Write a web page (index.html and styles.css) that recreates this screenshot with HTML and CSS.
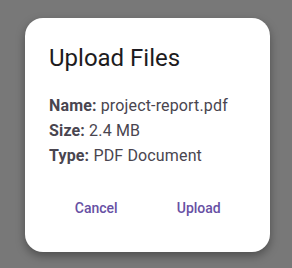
FILE: index.html
```html
<!DOCTYPE html>
<html>
<head>
    <title>Upload Files</title>
    <meta http-equiv="Content-Type" content="text/html; charset=utf-8" />
    <link rel="stylesheet" href="styles.css">
</head>
<body>
<div class="overlay">
    <div class="dialog">
        <div class="dialog-title">Upload Files</div>
        <div class="dialog-body">
            <div class="info-row"><b>Name:</b> project-report.pdf</div>
            <div class="info-row"><b>Size:</b> 2.4 MB</div>
            <div class="info-row"><b>Type:</b> PDF Document</div>
        </div>
        <div class="dialog-buttons">
            <div class="dialog-button">Cancel</div>
            <div class="dialog-button">Upload</div>
        </div>
    </div>
</div>
</body>
</html>
```

FILE: styles.css
```css
html, body {margin: 0; height: 100%; overflow: hidden;}
body{
    background: #787878;
    font-family: Roboto, "Liberation Sans", sans-serif;
}
.overlay{
    display: flex;
    justify-content: center;
    padding-top: 18px;
    padding-left: 3px;
}
.dialog{
    width: 197px;
    padding: 24px;
    background: white;
    border-radius: 18px;
    box-shadow: 0 4px 10px rgba(0, 0, 0, 0.35);
}
.dialog-title{
    font-size: 24px;
    line-height: 32px;
    color: #1d1b20;
    margin-bottom: 19px;
}
.dialog-body{
    font-size: 16px;
    line-height: 25px;
    letter-spacing: 0.15px;
    color: #49454f;
}
.dialog-body b{
    font-weight: 700;
}
.dialog-buttons{
    display: flex;
    gap: 8px;
    margin-top: 20px;
}
.dialog-button{
    flex: 1;
    text-align: center;
    padding: 10px 0;
    font-size: 14px;
    line-height: 20px;
    font-weight: 500;
    color: #6750a4;
    cursor: pointer;
}
```
